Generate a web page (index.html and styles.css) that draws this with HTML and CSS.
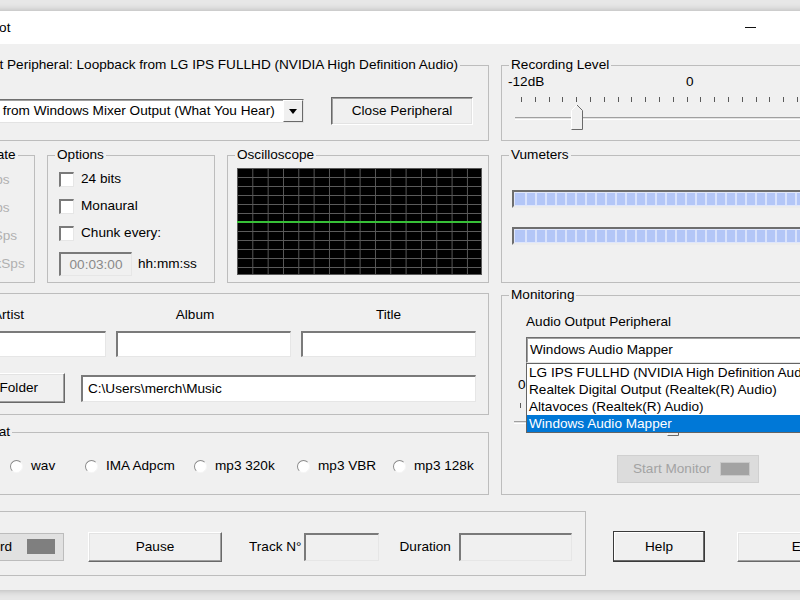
FILE: index.html
```html
<!DOCTYPE html>
<html>
<head>
    <meta charset="UTF-8">
    <title>Snapshot</title>
    <link rel="stylesheet" href="styles.css">
</head>
<body>
<div class="window">
    <div class="titlebar">
        <span class="title">Snapshot</span>
        <span class="cap-btn cap-min"></span>
        <span class="cap-btn cap-max"></span>
        <span class="cap-btn cap-close"></span>
    </div>

    <div class="client">
        <!-- input peripheral + recording level -->
        <div class="row row-top">
            <fieldset class="group h-top">
                <legend class="lg-input">Input Peripheral: Loopback from LG IPS FULLHD (NVIDIA High Definition Audio)</legend>
                <div class="input-body">
                    <div class="combo combo-input">
                        <span class="combo-text">Loopback from Windows Mixer Output (What You Hear)</span>
                        <span class="drop-btn"><svg width="8" height="5" viewBox="0 0 8 5"><path d="M0 0h8L4 5z" fill="#000"/></svg></span>
                    </div>
                    <button class="btn btn-pressed btn-close">Close Peripheral</button>
                </div>
            </fieldset>
            <fieldset class="group h-top">
                <legend>Recording Level</legend>
                <div class="rec-body">
                    <div class="scale"><span class="scale-min">-12dB</span><span>0</span></div>
                    <div class="slider">
                        <div class="track"></div>
                        <svg class="thumb" width="12" height="26" viewBox="0 0 12 26">
                            <path d="M0.5 25.5V6.5L6 1l5.5 5.5v19z" fill="#f0f0f0"/>
                            <path d="M0.5 25.5V6.5L6 1" fill="none" stroke="#fff"/>
                            <path d="M6 1l5.5 5.5v19H0.5" fill="none" stroke="#6a6a6a"/>
                        </svg>
                    </div>
                </div>
            </fieldset>
        </div>

        <!-- rate / options / scope / vumeters -->
        <div class="row row-mid">
            <fieldset class="group h-mid rate">
                <legend>Sample Rate</legend>
                <div class="rate-body">
                    <div class="rate-item"><span class="radio"></span>8 kSps</div>
                    <div class="rate-item"><span class="radio"></span>8 kSps</div>
                    <div class="rate-item"><span class="radio"></span>96 kSps</div>
                    <div class="rate-item"><span class="radio"></span>192 kSps</div>
                </div>
            </fieldset>
            <fieldset class="group h-mid">
                <legend>Options</legend>
                <div class="opt-body">
                    <div class="check-row"><span class="check"></span>24 bits</div>
                    <div class="check-row"><span class="check"></span>Monaural</div>
                    <div class="check-row"><span class="check"></span>Chunk every:</div>
                    <div class="time-row">
                        <input class="edit time-edit" type="text" value="00:03:00" disabled>
                        <span class="time-unit">hh:mm:ss</span>
                    </div>
                </div>
            </fieldset>
            <fieldset class="group h-mid">
                <legend>Oscilloscope</legend>
                <div class="osc-body">
                    <div class="scope"></div>
                </div>
            </fieldset>
            <fieldset class="group h-mid">
                <legend>Vumeters</legend>
                <div class="vu-body">
                    <div class="vu-bar"></div>
                    <div class="vu-bar"></div>
                </div>
            </fieldset>
        </div>

        <!-- tags, format, monitoring -->
        <div class="row row-low">
            <div class="left-col">
                <fieldset class="group tags">
                    <div class="tags-body">
                        <div class="tag-grid">
                            <span class="tag-label tl-artist">Artist</span>
                            <span class="tag-label tl-album">Album</span>
                            <span class="tag-label">Title</span>
                            <input class="edit" type="text" value="">
                            <input class="edit" type="text" value="">
                            <input class="edit" type="text" value="">
                        </div>
                        <div class="folder-row">
                            <button class="btn btn-folder">Select Folder</button>
                            <input class="edit edit-path" type="text" value="C:\Users\merch\Music">
                        </div>
                    </div>
                </fieldset>
                <fieldset class="group format">
                    <legend>Format</legend>
                    <div class="format-body">
                        <div class="radio-item"><span class="radio"></span>wav</div>
                        <div class="radio-item"><span class="radio"></span>IMA Adpcm</div>
                        <div class="radio-item"><span class="radio"></span>mp3 320k</div>
                        <div class="radio-item"><span class="radio"></span>mp3 VBR</div>
                        <div class="radio-item"><span class="radio"></span>mp3 128k</div>
                    </div>
                </fieldset>
            </div>

            <fieldset class="group monitor">
                <legend>Monitoring</legend>
                <div class="mon-body">
                    <div class="mon-label">Audio Output Peripheral</div>
                    <div class="combo combo-out">
                        <span class="combo-text">Windows Audio Mapper</span>
                        <div class="drop-list">
                            <div class="drop-item">LG IPS FULLHD (NVIDIA High Definition Audio)</div>
                            <div class="drop-item">Realtek Digital Output (Realtek(R) Audio)</div>
                            <div class="drop-item">Altavoces (Realtek(R) Audio)</div>
                            <div class="drop-item sel">Windows Audio Mapper</div>
                        </div>
                    </div>
                    <div class="mon-scale">0</div>
                    <div class="slider mon-slider">
                        <div class="track"></div>
                        <svg class="thumb thumb-mon" width="12" height="26" viewBox="0 0 12 26">
                            <path d="M0.5 25.5V6.5L6 1l5.5 5.5v19z" fill="#f0f0f0"/>
                            <path d="M0.5 25.5V6.5L6 1" fill="none" stroke="#fff"/>
                            <path d="M6 1l5.5 5.5v19H0.5" fill="none" stroke="#6a6a6a"/>
                        </svg>
                    </div>
                    <button class="btn-monitor" disabled><span>Start Monitor</span><span class="lamp lamp-off"></span></button>
                </div>
            </fieldset>
        </div>

        <!-- transport bar -->
        <div class="row-bottom">
            <div class="transport">
                <button class="btn-record"><span>Record</span><span class="lamp"></span></button>
                <button class="btn btn-pause">Pause</button>
                <span class="track-label">Track N°</span>
                <input class="edit edit-small edit-track" type="text" value="">
                <span class="dur-label">Duration</span>
                <input class="edit edit-small edit-dur" type="text" value="">
            </div>
            <button class="btn btn-help">Help</button>
            <button class="btn btn-exit">Exit</button>
        </div>
    </div>
</div>
</body>
</html>
```

FILE: styles.css
```css
html, body {
    margin: 0;
}
body {
    height: 600px;
    overflow: hidden;
    background: #e7e7e7;
    font-family: "Liberation Sans", Arial, sans-serif;
    font-size: 13.6px;
    line-height: 16px;
    color: #000;
}
.window {
    width: 976px;
    margin: 11px 0 0 -88px;
    background: #f0f0f0;
    box-shadow: 0 0 7px rgba(0,0,0,0.25);
}

/* title bar */
.titlebar {
    display: flex;
    align-items: center;
    height: 33px;
    background: #fff;
}
.title {
    flex: 1;
    padding-left: 41px;
}
.cap-btn {
    width: 55px;
    height: 33px;
    display: flex;
    align-items: center;
    justify-content: center;
}
.cap-min::before {
    content: "";
    width: 11px;
    border-top: 1px solid #111;
}
.cap-max::before {
    content: "";
    width: 9px;
    height: 9px;
    border: 1px solid #111;
}
.cap-close::before {
    content: "\2715";
    font-size: 12px;
}

/* layout rows */
.client {
    padding: 13px 8px 14px;
}
.row {
    display: grid;
    column-gap: 12px;
}
.row-top {
    grid-template-columns: 569px 379px;
}
.row-mid {
    grid-template-columns: 115px 168px 262px 379px;
    margin-top: 6px;
}
.row-low {
    grid-template-columns: 569px 379px;
    margin-top: 4px;
    align-items: start;
}
.row-bottom {
    display: flex;
    align-items: flex-start;
    margin-top: 16px;
}

/* group boxes */
.group {
    margin: 0;
    padding: 0;
    border: 1px solid #bdbdbd;
    box-sizing: border-box;
    min-width: 0;
}
.group legend {
    padding: 0 2px;
    margin-left: 7px;
    line-height: 16px;
    white-space: nowrap;
}
.h-top { height: 84px; }
.h-mid { height: 136px; }

/* common controls */
.btn {
    font: inherit;
    color: #000;
    padding: 0;
    box-sizing: border-box;
    background: #f0f0f0;
    border: 1px solid;
    border-color: #fff #696969 #696969 #fff;
    box-shadow: inset -1px -1px 0 #a0a0a0, inset 1px 1px 0 #e3e3e3;
}
.btn-pressed {
    border-color: #696969 #fff #fff #696969;
    box-shadow: inset 1px 1px 0 #a0a0a0, inset -1px -1px 0 #e3e3e3;
}
.edit {
    font: inherit;
    color: #000;
    margin: 0;
    padding: 0 5px;
    box-sizing: border-box;
    background: #fff;
    border-style: solid;
    border-width: 2px 1px 1px 2px;
    border-color: #7a7a7a #e6e6e6 #e6e6e6 #7a7a7a;
    outline: none;
    min-width: 0;
}
.combo {
    position: relative;
    display: flex;
    align-items: center;
    box-sizing: border-box;
    background: #fff;
    border: 1px solid;
    border-color: #6f6f6f #e3e3e3 #e3e3e3 #6f6f6f;
    box-shadow: inset 1px 1px 0 #a0a0a0;
}
.combo-text {
    flex: 1;
    padding-left: 2px;
    white-space: nowrap;
    overflow: hidden;
}
.drop-btn {
    width: 20px;
    height: 22px;
    box-sizing: border-box;
    display: flex;
    align-items: center;
    justify-content: center;
    background: #f0f0f0;
    border: 1px solid;
    border-color: #fff #696969 #696969 #fff;
}
.radio {
    flex: none;
    width: 13px;
    height: 13px;
    box-sizing: border-box;
    border-radius: 50%;
    background: #fff;
    border: 1px solid;
    border-color: #8a8a8a #f6f6f6 #f6f6f6 #8a8a8a;
}
.check {
    flex: none;
    width: 15px;
    height: 15px;
    box-sizing: border-box;
    background: #fff;
    border-style: solid;
    border-width: 2px 1px 1px 2px;
    border-color: #7a7a7a #e6e6e6 #e6e6e6 #7a7a7a;
    margin-right: 7px;
}
.lamp {
    width: 28px;
    height: 15px;
    background: #7f7f7f;
}

/* input peripheral */
.lg-input { margin-left: 50px !important; }
.input-body {
    display: flex;
    align-items: center;
    padding: 24px 0 0 16px;
}
.combo-input {
    flex: none;
    width: 367px;
    height: 24px;
    margin-right: 27px;
}
.btn-close {
    width: 142px;
    height: 28px;
}

/* recording level slider */
.rec-body {
    padding: 1px 0 0 6px;
}
.scale {
    display: flex;
}
.scale-min {
    width: 178px;
}
.slider {
    position: relative;
    height: 40px;
    margin-left: 7px;
    padding-top: 27px;
    box-sizing: border-box;
    background: repeating-linear-gradient(90deg, #5a5a5a 0 1px, transparent 1px 13.8px) 6px 7px / 100% 5px no-repeat;
}
.track {
    height: 1px;
    background: #e3e3e3;
    border-top: 1px solid #a0a0a0;
    border-bottom: 1px solid #fff;
}
.thumb {
    position: absolute;
    top: 14px;
    left: 56px;
}

/* sample rate */
.rate legend { margin-left: 14px; }
.rate-body {
    padding: 3px 0 0 28px;
}
.rate-item {
    display: flex;
    align-items: center;
    gap: 6px;
    height: 28px;
    color: #b0b0b0;
    white-space: nowrap;
}

/* options */
.opt-body {
    padding: 8px 0 0 11px;
}
.check-row {
    display: flex;
    align-items: center;
    height: 16px;
    margin-bottom: 11px;
}
.time-row {
    display: flex;
    align-items: center;
}
.time-edit {
    width: 73px;
    height: 24px;
    text-align: center;
    background: #f0f0f0;
    color: #8a8a8a;
}
.time-unit {
    margin-left: 6px;
}

/* oscilloscope */
.osc-body {
    padding: 5px 0 0 9px;
}
.scope {
    width: 245px;
    height: 107px;
    background-color: #000;
    background-image:
        linear-gradient(transparent 53px, #37c037 53px, #37c037 55px, transparent 55px),
        linear-gradient(90deg, #5a5a5a 1px, transparent 1px),
        linear-gradient(#5a5a5a 1px, transparent 1px);
    background-size: 100% 100%, 15.33px 100%, 100% 9px;
    box-shadow: inset -1px -1px 0 #5a5a5a;
}

/* vumeters */
.vu-body {
    padding: 27px 0 0 10px;
}
.vu-bar {
    width: 360px;
    height: 18px;
    box-sizing: border-box;
    margin-bottom: 19px;
    border: 2px solid;
    border-color: #6e6e6e #ececec #ececec #6e6e6e;
    background: repeating-linear-gradient(90deg, #b3c6f7 0 8px, #d9e2fb 8px 10px) 3px 0;
    box-shadow: inset 0 0 0 1px #dfe6fb;
}

/* tags */
.tags {
    margin-top: 6px;
    height: 122px;
}
.tags-body {
    padding: 13px 12px 0 10px;
}
.tag-grid {
    display: grid;
    grid-template-columns: repeat(3, 1fr);
    column-gap: 10px;
    row-gap: 8px;
}
.tag-grid .edit {
    height: 26px;
}
.tag-label {
    text-align: center;
}
.tl-artist { padding-right: 20px; }
.tl-album { padding-right: 17px; }
.folder-row {
    display: flex;
    align-items: center;
    margin-top: 16px;
}
.btn-folder {
    flex: none;
    width: 134px;
    height: 30px;
}
.edit-path {
    width: 395px;
    height: 27px;
    margin-left: 16px;
}

/* format */
.format {
    margin-top: 9px;
    height: 71px;
}
.format legend { margin-left: 44px; }
.format-body {
    display: grid;
    grid-template-columns: 75px 109px 103px 96px auto;
    padding: 18px 0 0 89px;
}
.radio-item {
    display: flex;
    align-items: center;
    gap: 8px;
    height: 16px;
    white-space: nowrap;
}

/* monitoring */
.monitor {
    height: 208px;
}
.mon-body {
    padding: 11px 0 0 12px;
}
.mon-label {
    margin-left: 12px;
}
.combo-out {
    width: 344px;
    height: 26px;
    margin: 7px 0 0 12px;
    z-index: 2;
}
.combo-out .combo-text {
    padding-left: 3px;
}
.drop-list {
    position: absolute;
    top: calc(100% + 1px);
    left: -1px;
    right: -1px;
    background: #fff;
    border: 1px solid #646464;
}
.drop-item {
    height: 17px;
    line-height: 17px;
    padding-left: 2px;
    white-space: nowrap;
    overflow: hidden;
}
.drop-item.sel {
    background: #0078d7;
    color: #fff;
}
.mon-scale {
    margin: 14px 0 0 4px;
}
.mon-slider {
    height: 44px;
    margin-left: 0;
    padding-top: 28px;
    background-position: 6px 10px;
}
.thumb-mon {
    top: 17px;
    left: 153px;
}
.btn-monitor {
    font: inherit;
    display: flex;
    align-items: center;
    justify-content: space-between;
    width: 142px;
    height: 28px;
    margin: 18px 0 0 103px;
    padding: 0 9px 0 15px;
    box-sizing: border-box;
    background: #dcdcdc;
    border: 1px solid #d0d0d0;
    color: #a3a3a3;
}
.lamp-off {
    height: 12px;
    background: #a3a3a3;
    box-shadow: 0 0 0 1px #c9c9c9;
}

/* transport */
.transport {
    flex: none;
    display: flex;
    align-items: center;
    width: 666px;
    height: 65px;
    box-sizing: border-box;
    padding: 6px 13px 0 19px;
    border: 1px solid #bdbdbd;
}
.btn-record {
    font: inherit;
    display: flex;
    align-items: center;
    justify-content: flex-end;
    gap: 15px;
    width: 124px;
    height: 28px;
    box-sizing: border-box;
    padding: 0 8px 0 0;
    background: #e1e1e1;
    border: 1px solid #bcbcbc;
    color: #000;
}
.btn-pause {
    width: 134px;
    height: 30px;
    margin-left: 24px;
}
.track-label {
    margin-left: 27px;
    white-space: nowrap;
}
.edit-small {
    width: 75px;
    height: 28px;
    background: #f0f0f0;
}
.edit-track {
    margin-left: 2px;
}
.dur-label {
    margin-left: 21px;
}
.edit-dur {
    width: 113px;
    margin-left: 8px;
}
.btn-help {
    width: 92px;
    height: 31px;
    margin: 20px 0 0 27px;
    border: 1px solid #3a3a3a;
    box-shadow: inset -1px -1px 0 #696969, inset 1px 1px 0 #fff;
}
.btn-exit {
    width: 132px;
    height: 30px;
    margin: 21px 0 0 32px;
}
```
